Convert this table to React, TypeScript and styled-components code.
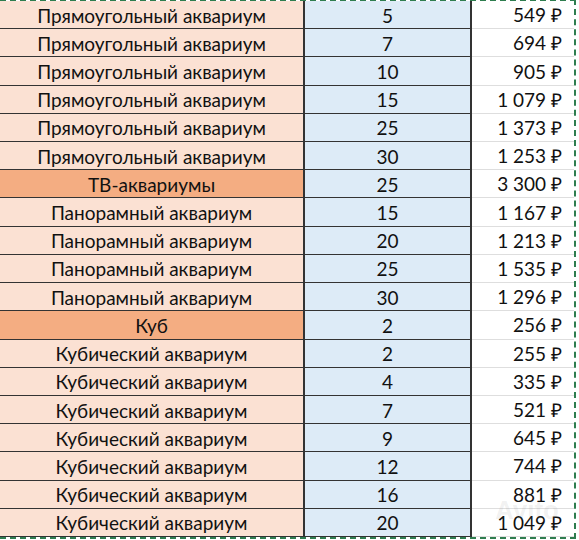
import React from "react";
import styled, { createGlobalStyle } from "styled-components";

type Kind = "item" | "group";

interface IRow {
  name: string;
  volume: number;
  price: string;
  kind: Kind;
}

const rows: IRow[] = [
  { name: "Прямоугольный аквариум", volume: 5, price: "549 ₽", kind: "item" },
  { name: "Прямоугольный аквариум", volume: 7, price: "694 ₽", kind: "item" },
  { name: "Прямоугольный аквариум", volume: 10, price: "905 ₽", kind: "item" },
  { name: "Прямоугольный аквариум", volume: 15, price: "1 079 ₽", kind: "item" },
  { name: "Прямоугольный аквариум", volume: 25, price: "1 373 ₽", kind: "item" },
  { name: "Прямоугольный аквариум", volume: 30, price: "1 253 ₽", kind: "item" },
  { name: "ТВ-аквариумы", volume: 25, price: "3 300 ₽", kind: "group" },
  { name: "Панорамный аквариум", volume: 15, price: "1 167 ₽", kind: "item" },
  { name: "Панорамный аквариум", volume: 20, price: "1 213 ₽", kind: "item" },
  { name: "Панорамный аквариум", volume: 25, price: "1 535 ₽", kind: "item" },
  { name: "Панорамный аквариум", volume: 30, price: "1 296 ₽", kind: "item" },
  { name: "Куб", volume: 2, price: "256 ₽", kind: "group" },
  { name: "Кубический аквариум", volume: 2, price: "255 ₽", kind: "item" },
  { name: "Кубический аквариум", volume: 4, price: "335 ₽", kind: "item" },
  { name: "Кубический аквариум", volume: 7, price: "521 ₽", kind: "item" },
  { name: "Кубический аквариум", volume: 9, price: "645 ₽", kind: "item" },
  { name: "Кубический аквариум", volume: 12, price: "744 ₽", kind: "item" },
  { name: "Кубический аквариум", volume: 16, price: "881 ₽", kind: "item" },
  { name: "Кубический аквариум", volume: 20, price: "1 049 ₽", kind: "item" },
];

function App() {
  return (
    <>
      <GlobalStyle />
      <Sheet>
        <Table>
          {rows.map((row, index) => (
            <React.Fragment key={index}>
              <NameCell kind={row.kind}>{row.name}</NameCell>
              <VolumeCell>{row.volume}</VolumeCell>
              <PriceCell>{row.price}</PriceCell>
            </React.Fragment>
          ))}
        </Table>
        <Watermark>Avito</Watermark>
      </Sheet>
    </>
  );
}

const GlobalStyle = createGlobalStyle`
  html, body {
    margin: 0;
    background: #ffffff;
    overflow: hidden;
  }
  body {
    font-family: Lato, "Open Sans", sans-serif;
  }
`;

const Sheet = styled.div`
  position: relative;
  width: 579px;
  height: 540px;
  overflow: hidden;
`;

const Table = styled.div`
  display: grid;
  grid-template-columns: 305px 167px 102px;
  grid-template-rows: repeat(19, 1fr);
  width: 574px;
  height: 536px;
  border-top: 2px dashed #2e7d4f;
  border-right: 2px dashed #2e7d4f;
  border-bottom: 2px dashed #2e7d4f;
  margin-top: -1px;
`;

const Cell = styled.div`
  display: flex;
  align-items: center;
  padding-top: 1px;
  font-size: 19px;
  color: #111111;
  box-sizing: border-box;
  border-bottom: 1px solid #333333;
  white-space: nowrap;
`;

const NameCell = styled(Cell)<{ kind: Kind }>`
  justify-content: center;
  background: ${(p) => (p.kind === "group" ? "#f4ad82" : "#fbe1d3")};
  border-right: 2px solid #333333;
`;

const VolumeCell = styled(Cell)`
  justify-content: center;
  background: #ddebf7;
  border-right: 2px solid #333333;
`;

const PriceCell = styled(Cell)`
  justify-content: flex-end;
  padding-right: 12px;
  background: #ffffff;
  border-bottom: 1px solid #dedede;
`;

const Watermark = styled.div`
  position: absolute;
  right: 20px;
  bottom: 14px;
  font-family: "Liberation Sans", sans-serif;
  font-size: 26px;
  font-weight: bold;
  color: rgba(120, 120, 120, 0.1);
  pointer-events: none;
`;

export default App;
